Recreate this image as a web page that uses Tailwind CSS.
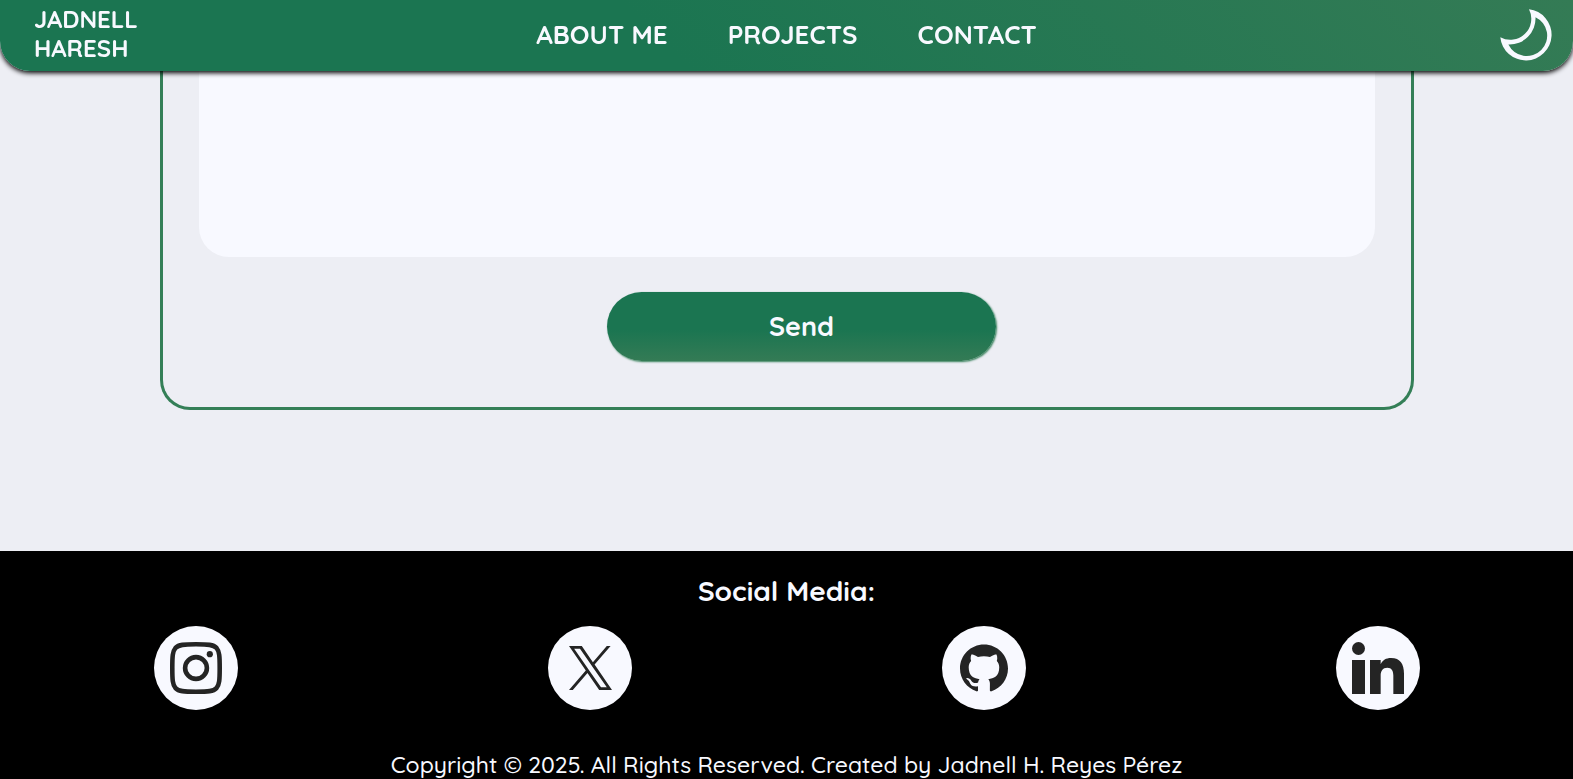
<!DOCTYPE html>
<html lang="en">
<head>
<meta charset="utf-8">
<meta name="viewport" content="width=device-width, initial-scale=1">
<title>Jadnell Haresh</title>
<script src="https://cdn.jsdelivr.net/npm/@tailwindcss/browser@4"></script>
</head>
<body class="flex min-h-screen flex-col bg-[#edeef4] font-[Quicksand,Lato,sans-serif] text-[#f8f9ff]">
<header class="fixed inset-x-0 top-0 z-10 grid h-[71px] grid-cols-[1fr_auto_1fr] items-center rounded-b-[30px] bg-[linear-gradient(45deg,#1b7551_42%,#347b55)] px-[21px] pb-px shadow-[0_2px_5px_#000]">
  <a href="#" class="mb-0.5 ml-[13px] w-min text-[24px] leading-[29px] font-bold">JADNELL HARESH</a>
  <nav class="flex gap-[60px] text-[26px] leading-8 font-bold">
    <a href="#about">ABOUT ME</a>
    <a href="#projects">PROJECTS</a>
    <a href="#contact">CONTACT</a>
  </nav>
  <button type="button" aria-label="Dark mode" class="justify-self-end">
    <svg class="size-[52px]" viewBox="0 0 52 52" fill="currentColor" fill-rule="evenodd"><path d="M29 .2A25.7 25.7 0 1 1 .3 28.2A21 21 0 0 0 29 .2ZM35.5 8.2A20.4 20.4 0 1 1 8.4 35.5A26 26 0 0 0 35.5 8.2Z"/></svg>
  </button>
</header>
<main class="flex-1 pr-[159px] pl-40 pb-[141px]">
  <form id="contact" class="flex flex-col items-center rounded-b-[30px] border-3 border-t-0 border-[#347f57] px-9 pb-[46px]">
    <textarea aria-label="Message" class="h-[257px] w-full resize-none rounded-b-[30px] bg-[#f8f9ff] p-6 text-[#222] outline-none"></textarea>
    <button type="button" class="mt-[35px] ml-[29px] h-[69px] w-[389px] rounded-full bg-[linear-gradient(#1b7551_55%,#347b55)] text-[27px] font-bold shadow-[1px_1px_2px_#347f57]">Send</button>
  </form>
</main>
<footer class="bg-black pt-[23px] text-center">
  <h2 class="text-[28px] leading-[34px] font-bold">Social Media:</h2>
  <ul class="mt-[18px] flex justify-between pr-[153px] pl-[154px] text-[#242424]">
    <li><a href="#" aria-label="Instagram" class="grid size-[84px] place-items-center rounded-full bg-[#f8f9ff]">
      <svg class="size-[52px]" viewBox="0 0 52 52" fill="none" stroke="currentColor" stroke-width="4.6"><path d="M26 2.3C38 2.3 43.4 2.6 46.5 5.9C49.4 9.4 49.7 14 49.7 26S49.4 42.6 46.5 46.1C43.4 49.4 38 49.7 26 49.7S8.6 49.4 5.5 46.1C2.6 42.6 2.3 38 2.3 26S2.6 9.4 5.5 5.9C8.6 2.6 14 2.3 26 2.3Z"/><circle cx="26" cy="26" r="10.9"/><circle cx="39.8" cy="12.2" r="3.1" fill="currentColor" stroke="none"/></svg>
    </a></li>
    <li><a href="#" aria-label="X" class="grid size-[84px] place-items-center rounded-full bg-[#f8f9ff]">
      <svg class="h-11 w-[43px]" viewBox="0 0 1200 1227" fill="currentColor"><path d="M714.163 519.284L1160.89 0H1055.03L667.137 450.887L357.328 0H0L468.492 681.821L0 1226.37H105.866L515.491 750.218L842.672 1226.37H1200L714.137 519.284H714.163ZM569.165 687.828L521.697 619.934L144.011 79.6944H306.615L611.412 515.685L658.88 583.579L1055.08 1150.3H892.476L569.165 687.854V687.828Z"/></svg>
    </a></li>
    <li><a href="#" aria-label="GitHub" class="grid size-[84px] place-items-center rounded-full bg-[#f8f9ff]">
      <svg class="size-12" viewBox="0 0 24 24" fill="currentColor"><path d="M12 .297c-6.63 0-12 5.373-12 12 0 5.303 3.438 9.8 8.205 11.385.6.113.82-.258.82-.577 0-.285-.01-1.04-.015-2.04-3.338.724-4.042-1.61-4.042-1.61C4.422 18.07 3.633 17.7 3.633 17.7c-1.087-.744.084-.729.084-.729 1.205.084 1.838 1.236 1.838 1.236 1.07 1.835 2.809 1.305 3.495.998.108-.776.417-1.305.76-1.605-2.665-.3-5.466-1.332-5.466-5.93 0-1.31.465-2.38 1.235-3.22-.135-.303-.54-1.523.105-3.176 0 0 1.005-.322 3.3 1.23.96-.267 1.98-.399 3-.405 1.02.006 2.04.138 3 .405 2.28-1.552 3.285-1.23 3.285-1.23.645 1.653.24 2.873.12 3.176.765.84 1.23 1.91 1.23 3.22 0 4.61-2.805 5.625-5.475 5.92.42.36.81 1.096.81 2.22 0 1.606-.015 2.896-.015 3.286 0 .315.21.69.825.57C20.565 22.092 24 17.592 24 12.297c0-6.627-5.373-12-12-12"/></svg>
    </a></li>
    <li><a href="#" aria-label="LinkedIn" class="grid size-[84px] place-items-center rounded-full bg-[#f8f9ff]">
      <svg class="size-[52px]" viewBox="0 0 156 156" fill="currentColor"><circle cx="19.5" cy="19.5" r="19.5"/><path d="M0 54H39V156H0ZM54 54H86V67C92 54 102 48 117 48C145 48 156 66 156 95V156H124V101C124 86 119 77 106 77C92 77 86 87 86 101V156H54Z"/></svg>
    </a></li>
  </ul>
  <p class="mt-[41px] text-[23px] leading-7 font-medium">Copyright © 2025. All Rights Reserved. Created by Jadnell H. Reyes Pérez</p>
</footer>
</body>
</html>
